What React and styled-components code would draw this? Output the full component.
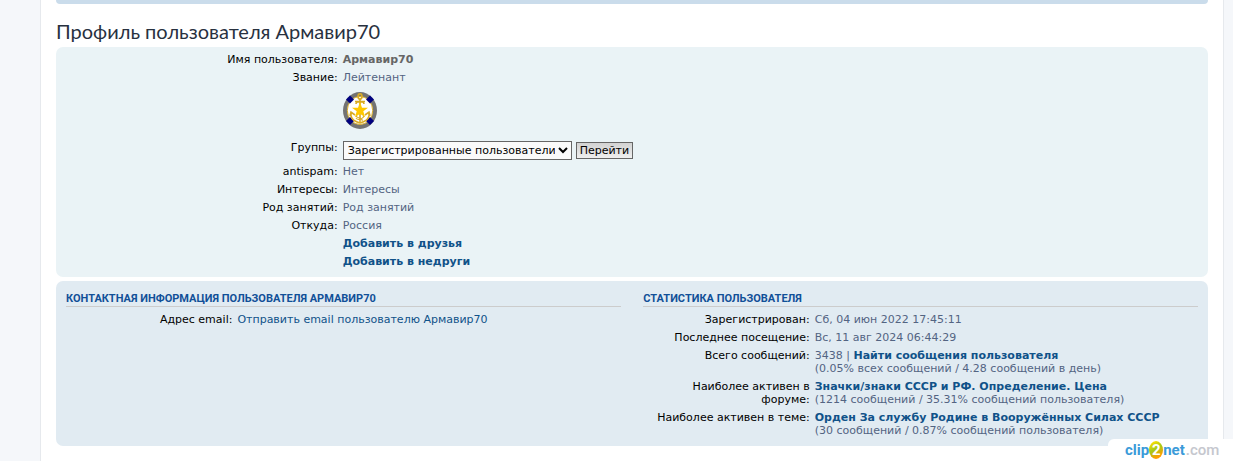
import React from "react";
import styled, { createGlobalStyle } from "styled-components";

const GlobalStyle = createGlobalStyle`
  *, *::before, *::after { box-sizing: border-box; }
  body {
    margin: 0;
    background: #f5f7fa;
    color: #536482;
    font-family: Verdana, "DejaVu Sans", sans-serif;
    font-size: 11px;
    line-height: 13px;
  }
`;

const Page = styled.div`
  min-height: 100vh;
  margin: 0 9px 0 40px;
  padding: 0 15px;
  background: #fff;
  border: solid #e6e9ed;
  border-width: 0 1px;
`;

const NavBar = styled.div`
  height: 4px;
  border-radius: 0 0 7px 7px;
  background: #cadceb;
`;

const Title = styled.h2`
  margin: 15px 0 4px;
  color: #28313f;
  font-family: "Trebuchet MS", Lato, sans-serif;
  font-size: 20px;
  font-weight: 400;
  line-height: 24px;
`;

const Panel = styled.section`
  margin-bottom: 4px;
  padding: 5px 10px 4px;
  border-radius: 7px;
  background: ${(p) => p.$bg};
`;

const Columns = styled.div`
  display: grid;
  grid-template-columns: 49% 49%;
  justify-content: space-between;
`;

const Heading = styled.h3`
  margin: 5px 0;
  height: 16px;
  border-bottom: 1px solid #ccc;
  color: #115098;
  font-family: Roboto, Arial, sans-serif;
  font-size: 11px;
  font-weight: 700;
  line-height: 15px;
  text-transform: uppercase;
`;

const Details = styled.dl`
  width: ${(p) => p.$width || "100%"};
  margin: 0;
  padding-top: 1px;
`;

const Row = styled.div`
  display: grid;
  grid-template-columns: 30% 1fr;
  margin-bottom: 5px;
`;

const Term = styled.dt`
  color: #000;
  text-align: right;
`;

const Value = styled.dd`
  margin: 0;
  padding-left: 5px;
`;

const Username = styled.span`
  color: #666;
  font-weight: 700;
`;

const Link = styled.a`
  color: #105289;
  font-weight: ${(p) => (p.$strong ? 700 : 400)};
  text-decoration: none;
  &:hover { color: #d31141; text-decoration: underline; }
`;

const RankBadge = styled.svg`
  display: block;
  margin: 3px 0 7px;
`;

const GroupForm = styled.form`
  display: flex;
  align-items: center;
  gap: 4px;
`;

const Select = styled.select`
  width: 229px;
  height: 19px;
  padding: 0;
  border: 1px solid #666;
  border-radius: 0;
  background-color: #fafafa;
  color: #000;
  font: inherit;
`;

const Button = styled.button`
  height: 17px;
  padding: 0 3px;
  border: 1px solid #666;
  background: linear-gradient(#d2d2d2, #efefef);
  color: #000;
  font: inherit;
  line-height: 15px;
`;

const Watermark = styled.div`
  position: fixed;
  right: 0;
  bottom: 0;
  display: flex;
  align-items: center;
  width: 125px;
  height: 22px;
  padding-left: 17px;
  border-top-left-radius: 6px;
  background: #fff;
  color: #3b9bd9;
  font-family: Roboto, Arial, sans-serif;
  font-size: 15px;
  font-weight: 700;
  line-height: 20px;
`;

const Ball = styled.span`
  display: inline-flex;
  align-items: center;
  justify-content: center;
  width: 14px;
  height: 18px;
  border-radius: 50%;
  background: linear-gradient(150deg, #ffe000 10%, #a5c918 45%, #ff9d00 80%);
  color: #fff;
`;

const Domain = styled.span`
  margin-left: 1px;
  color: #c5c7ce;
  font-weight: 500;
`;

function Field({ label, htmlFor, children }) {
  return (
    <Row>
      <Term>{htmlFor ? <label htmlFor={htmlFor}>{label}</label> : label}</Term>
      <Value>{children}</Value>
    </Row>
  );
}

function LieutenantBadge() {
  return (
    <RankBadge width="34" height="37" viewBox="0 0 34 37" role="img" aria-label="Лейтенант">
      <ellipse cx="17" cy="18.5" rx="17" ry="18.5" fill="#737373" />
      <ellipse cx="17" cy="18.5" rx="12.7" ry="14" fill="#fff" stroke="#dcb02c" strokeWidth="1" />
      <g fill="#000080">
        <path d="M3 7.5 7 3.5l4 4-4 4z" />
        <path d="M23 7.5 27 3.5l4 4-4 4z" />
        <path d="M3 29 7 25l4 4-4 4z" />
        <path d="M23 29 27 25l4 4-4 4z" />
      </g>
      <g fill="none" stroke="#d9ab24" strokeWidth="1.6">
        <ellipse cx="17" cy="4.5" rx="2" ry="2.6" />
        <path d="M17 7v24M12 9.5h10M13 12c0-3 8-3 8 0" />
        <path d="M8 20v4c1 4 5 6 9 7 4-1 8-3 9-7v-4M7 24l1-4 4 3M27 24l-1-4-4 3" />
        <path d="M14 23c-3 3 7 3 5 6M13 26c2 3 7 1 8-2" strokeWidth="1.1" />
      </g>
      <path d="m17 10 2 5.7h6l-4.7 3.6 1.8 5.9-5.1-3.5-5.1 3.5 1.8-5.9L9 15.7h6z" fill="#ffc800" />
    </RankBadge>
  );
}

export default function App() {
  return (
    <>
      <GlobalStyle />
      <Page>
        <NavBar />
        <main>
          <Title>Профиль пользователя Армавир70</Title>
          <Panel $bg="#eaf3f6">
            <Details $width="80%">
              <Field label="Имя пользователя:"><Username>Армавир70</Username></Field>
              <Field label="Звание:">Лейтенант</Field>
              <Field label=""><LieutenantBadge /></Field>
              <Field label="Группы:" htmlFor="group">
                <GroupForm onSubmit={(e) => e.preventDefault()}>
                  <Select id="group"><option>Зарегистрированные пользователи</option></Select>
                  <Button type="submit">Перейти</Button>
                </GroupForm>
              </Field>
              <Field label="antispam:">Нет</Field>
              <Field label="Интересы:">Интересы</Field>
              <Field label="Род занятий:">Род занятий</Field>
              <Field label="Откуда:">Россия</Field>
              <Field label=""><Link $strong href="#friend">Добавить в друзья</Link></Field>
              <Field label=""><Link $strong href="#foe">Добавить в недруги</Link></Field>
            </Details>
          </Panel>
          <Panel $bg="#e1ebf2">
            <Columns>
              <div>
                <Heading>Контактная информация пользователя Армавир70</Heading>
                <Details>
                  <Field label="Адрес email:">
                    <Link href="#email">Отправить email пользователю Армавир70</Link>
                  </Field>
                </Details>
              </div>
              <div>
                <Heading>Статистика пользователя</Heading>
                <Details>
                  <Field label="Зарегистрирован:">Сб, 04 июн 2022 17:45:11</Field>
                  <Field label="Последнее посещение:">Вс, 11 авг 2024 06:44:29</Field>
                  <Field label="Всего сообщений:">
                    3438 | <Link $strong href="#posts">Найти сообщения пользователя</Link>
                    <br />(0.05% всех сообщений / 4.28 сообщений в день)
                  </Field>
                  <Field label="Наиболее активен в форуме:">
                    <Link $strong href="#forum">Значки/знаки СССР и РФ. Определение. Цена</Link>
                    <br />(1214 сообщений / 35.31% сообщений пользователя)
                  </Field>
                  <Field label="Наиболее активен в теме:">
                    <Link $strong href="#topic">Орден За службу Родине в Вооружённых Силах СССР</Link>
                    <br />(30 сообщений / 0.87% сообщений пользователя)
                  </Field>
                </Details>
              </div>
            </Columns>
          </Panel>
        </main>
      </Page>
      <Watermark>clip<Ball>2</Ball>net<Domain>.com</Domain></Watermark>
    </>
  );
}
